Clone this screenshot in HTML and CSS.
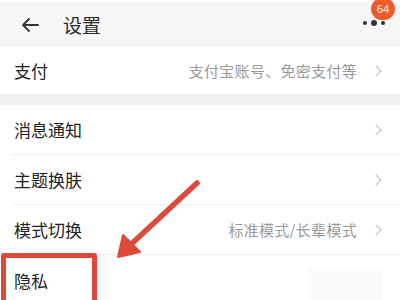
FILE: index.html
```html
<!DOCTYPE html>
<html lang="zh">
<head>
<meta charset="utf-8">
<link rel="stylesheet" href="styles.css">
</head>
<body>
<div class="page">
  <header class="topbar">
    <svg class="back" width="18" height="14" viewBox="0 0 18 14"><path d="M17 7H2M8 1L2 7l6 6" fill="none" stroke="#333" stroke-width="1.8" stroke-linecap="round" stroke-linejoin="round"/></svg>
    <span class="title">设置</span>
    <span class="more"><i class="dot"></i><i class="dot big"></i><i class="dot"></i></span>
    <span class="badge">64</span>
  </header>
  <div class="group">
    <div class="row"><span class="label">支付</span><span class="value">支付宝账号、免密支付等</span><span class="chev"></span></div>
  </div>
  <div class="gap"></div>
  <div class="group">
    <div class="row"><span class="label">消息通知</span><span class="chev"></span></div>
    <div class="row"><span class="label">主题换肤</span><span class="chev"></span></div>
    <div class="row"><span class="label">模式切换</span><span class="value">标准模式/长辈模式</span><span class="chev"></span></div>
    <div class="row"><span class="label">隐私</span></div>
  </div>
  <div class="blur"></div>
  <div class="hl-box"></div>
  <svg class="pointer" width="400" height="300" viewBox="0 0 400 300">
    <path d="M197 183L126 249" stroke="#dd4a3a" stroke-width="5.5" stroke-linecap="round"/>
    <path d="M118 257L123 235L140 252Z" fill="#dd4a3a" stroke="#dd4a3a" stroke-width="2" stroke-linejoin="round"/>
  </svg>
</div>
</body>
</html>
```
FILE: styles.css
```css
* { box-sizing: border-box; margin: 0; padding: 0; }
html, body { width: 400px; height: 300px; overflow: hidden; }
body { background: #fff; font-family: "Noto Sans CJK SC", "Noto Sans", sans-serif; color: #222; }
.page { position: relative; width: 400px; height: 300px; overflow: hidden; }
.topbar { height: 47px; background: #f6f6f6; display: flex; align-items: center; padding-left: 21px; border-top: 2px solid #fbfbfb; }
.back { display: block; margin-top: 1px; }
.title { font-size: 19px; margin-left: 24px; line-height: 1; color: #2a2a2a; }
.more { position: absolute; left: 363px; top: 20px; display: flex; align-items: center; gap: 4px; }
.dot { display: block; width: 4px; height: 4px; border-radius: 50%; background: #333; }
.dot.big { width: 6px; height: 6px; }
.badge { position: absolute; left: 371px; top: -2px; width: 24px; height: 22px; border-radius: 11px; background: #ee5a2a; color: #fff; font-size: 11px; line-height: 22px; text-align: center; font-family: "Noto Sans", sans-serif; }
.group { background: #fff; }
.row { height: 50px; display: flex; align-items: center; padding-right: 18px; border-bottom: 1px solid #eeeeee; margin-left: 13px; padding-left: 1px; }
.group:first-of-type .row { height: 47px; border-bottom: none; }
.row:last-child { border-bottom: none; }
.label { font-size: 17px; line-height: 1; flex: 1; }
.value { font-size: 15px; color: #999; line-height: 1; margin-right: 15px; letter-spacing: 0.3px; }
.chev { width: 8px; height: 8px; border-top: 1.3px solid #bbb; border-right: 1.3px solid #bbb; transform: rotate(45deg); margin-right: 2px; }
.gap { height: 11px; background: #efefef; }
.blur { position: absolute; left: 308px; top: 268px; width: 75px; height: 32px; background: #fafafa; }
.hl-box { position: absolute; left: 1px; top: 253px; width: 96px; height: 52px; border: 5px solid #dd4a3a; border-radius: 3px; }
.pointer { position: absolute; left: 0; top: 0; }
```
